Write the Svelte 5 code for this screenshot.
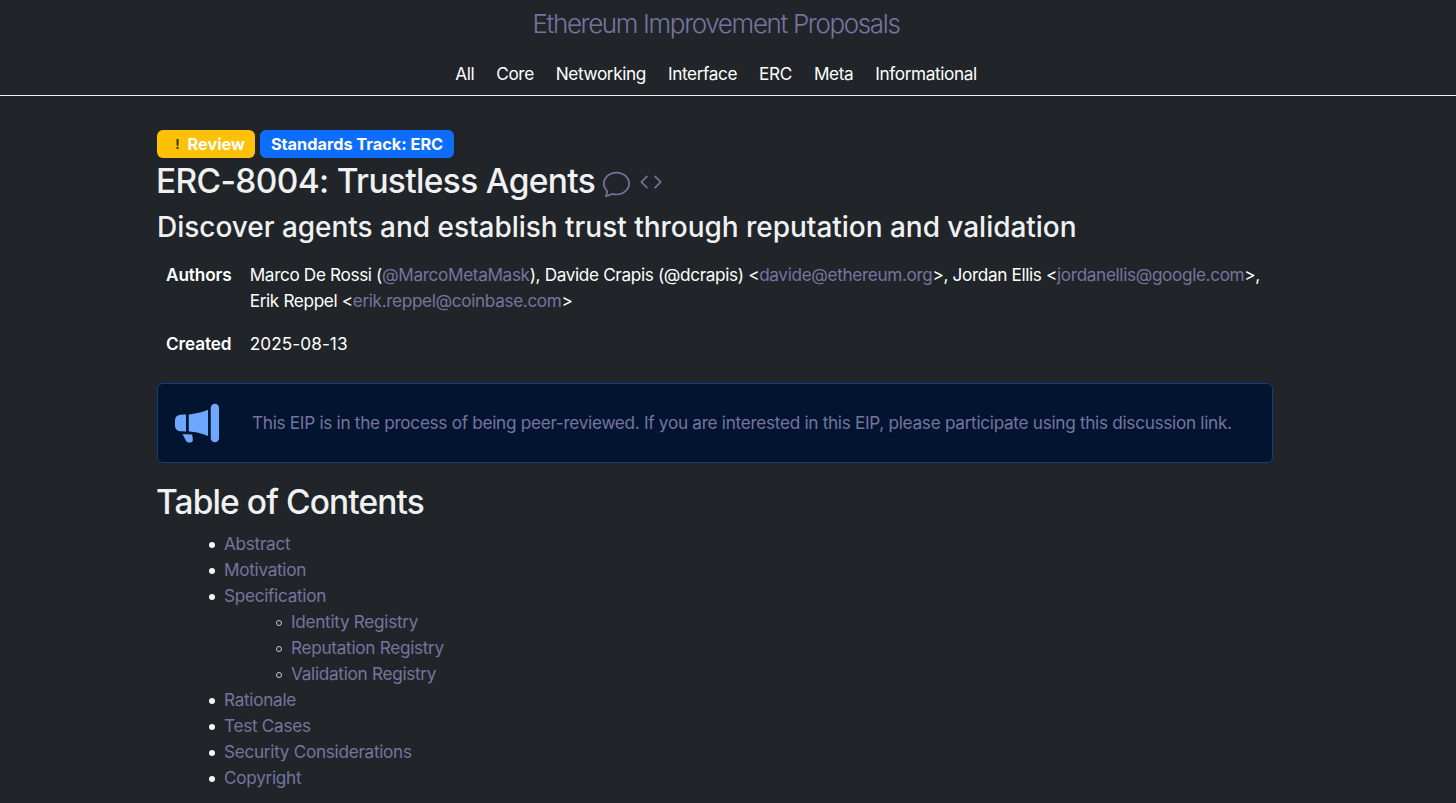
<script>
	const navItems = ['All', 'Core', 'Networking', 'Interface', 'ERC', 'Meta', 'Informational'];
	const toc = [
		{ title: 'Abstract' },
		{ title: 'Motivation' },
		{ title: 'Specification', children: ['Identity Registry', 'Reputation Registry', 'Validation Registry'] },
		{ title: 'Rationale' },
		{ title: 'Test Cases' },
		{ title: 'Security Considerations' },
		{ title: 'Copyright' }
	];
</script>

<header class="site-header">
	<a class="site-title" href="#top">Ethereum Improvement Proposals</a>
	<nav class="site-nav">
		{#each navItems as item}
			<a href="#top">{item}</a>
		{/each}
	</nav>
</header>

<main class="content">
	<div class="badges">
		<span class="badge review"><span class="warn">!</span>Review</span>
		<span class="badge track">Standards Track: ERC</span>
	</div>
	<h1>
		ERC-8004: Trustless Agents
		<svg class="chat" viewBox="0 0 16 16" aria-hidden="true">
			<path d="M2.678 11.894a1 1 0 0 1 .287.801 10.97 10.97 0 0 1-.398 2c1.395-.323 2.247-.697 2.634-.893a1 1 0 0 1 .71-.074A8.06 8.06 0 0 0 8 14c3.996 0 7-2.807 7-6 0-3.192-3.004-6-7-6S1 4.808 1 8c0 1.468.617 2.83 1.678 3.894zm-.493 3.905a21.682 21.682 0 0 1-.713.129c-.2.032-.352-.176-.273-.362a9.68 9.68 0 0 0 .244-.637l.003-.01c.248-.72.45-1.548.524-2.319C.743 11.37 0 9.76 0 8c0-3.866 3.582-7 8-7s8 3.134 8 7-3.582 7-8 7a9.06 9.06 0 0 1-2.347-.306c-.52.263-1.639.742-3.468 1.105z" />
		</svg>
		<svg class="code" viewBox="0 0 16 16" aria-hidden="true">
			<path d="M5.854 4.854a.5.5 0 1 0-.708-.708l-3.5 3.5a.5.5 0 0 0 0 .708l3.5 3.5a.5.5 0 0 0 .708-.708L2.707 8l3.147-3.146zm4.292 0a.5.5 0 0 1 .708-.708l3.5 3.5a.5.5 0 0 1 0 .708l-3.5 3.5a.5.5 0 0 1-.708-.708L13.293 8l-3.147-3.146z" />
		</svg>
	</h1>
	<h2 class="subtitle">Discover agents and establish trust through reputation and validation</h2>

	<table class="meta">
		<tbody>
			<tr>
				<th>Authors</th>
				<td>
					Marco De Rossi (<a href="#top">@MarcoMetaMask</a>), Davide Crapis (@dcrapis) &lt;<a href="#top">davide@ethereum.org</a>&gt;, Jordan Ellis &lt;<a href="#top">jordanellis@google.com</a>&gt;, Erik Reppel &lt;<a href="#top">erik.reppel@coinbase.com</a>&gt;
				</td>
			</tr>
			<tr>
				<th>Created</th>
				<td class="date">2025-08-13</td>
			</tr>
		</tbody>
	</table>

	<div class="notice">
		<svg class="horn" viewBox="0 0 16 16" aria-hidden="true">
			<path d="M13 2.5a1.5 1.5 0 0 1 3 0v11a1.5 1.5 0 0 1-3 0v-11zm-1 .724c-2.067.95-4.539 1.481-7 1.656v6.237a25.222 25.222 0 0 1 1.088.085c2.053.204 4.038.668 5.912 1.56V3.224zm-8 7.841V4.934c-.68.027-1.399.043-2.008.053A2.02 2.02 0 0 0 0 7v2c0 1.106.896 1.996 1.994 2.009a68.14 68.14 0 0 1 .496.008 64 64 0 0 1 1.51.048zm1.39 1.081c.285.021.569.047.85.078l.253 1.69a1 1 0 0 1-.983 1.187h-.548a1 1 0 0 1-.916-.599l-1.314-2.48a65.81 65.81 0 0 1 1.692.064c.327.017.65.037.966.06z" />
		</svg>
		<p>This EIP is in the process of being peer-reviewed. If you are interested in this EIP, please participate using this discussion link.</p>
	</div>

	<h2 class="toc-title">Table of Contents</h2>
	<ul class="toc">
		{#each toc as item}
			<li>
				<a href="#top">{item.title}</a>
				{#if item.children}
					<ul class="toc-nested">
						{#each item.children as child}
							<li><a href="#top">{child}</a></li>
						{/each}
					</ul>
				{/if}
			</li>
		{/each}
	</ul>
</main>

<style>
	:global(body) {
		margin: 0;
		background: #212529;
		color: #fff;
		font-family: Inter, "Noto Sans", sans-serif;
		font-size: 17.2px;
		letter-spacing: -0.3px;
		line-height: 26px;
		overflow: hidden;
	}

	a {
		color: #76749f;
		text-decoration: none;
	}

	.site-header {
		display: flex;
		flex-direction: column;
		align-items: center;
		height: 95px;
		border-bottom: 1px solid #f4f4f4;
		padding-right: 24px;
	}

	.site-title {
		margin-top: 7px;
		font-size: 26px;
		line-height: 34px;
		font-weight: 300;
		letter-spacing: -1.36px;
	}

	.site-nav {
		display: flex;
		gap: 22px;
		margin-top: 20px;
	}

	.site-nav a {
		color: #fff;
		font-size: 17.2px;
		letter-spacing: -0.38px;
	}

	.content {
		width: 1116px;
		margin-left: 157px;
		padding-top: 34px;
	}

	.badges {
		display: flex;
		gap: 5px;
		height: 28px;
	}

	.badge {
		display: block;
		height: 28px;
		padding: 0 10.5px;
		border-radius: 6px;
		color: #fff;
		font-size: 16.3px;
		font-weight: 700;
		letter-spacing: 0;
		line-height: 28px;
	}

	.review {
		background: #ffc107;
	}

	.warn {
		display: inline-block;
		width: 20px;
		color: #3a2f00;
		font-size: 13px;
		text-align: center;
		vertical-align: 1px;
	}

	.track {
		background: #0d6efd;
	}

	h1 {
		margin: 3px 0 0;
		color: #f0f1f3;
		font-size: 33.5px;
		font-weight: 500;
		letter-spacing: -0.66px;
		line-height: 40px;
		text-indent: -1px;
	}

	.chat {
		width: 27px;
		height: 27px;
		vertical-align: -4px;
		fill: #76749f;
	}

	.code {
		width: 26px;
		height: 26px;
		margin-left: -1px;
		vertical-align: -2px;
		fill: #76749f;
	}

	.subtitle {
		margin: 9px 0 0;
		color: #f0f1f3;
		font-size: 28px;
		font-weight: 500;
		letter-spacing: -0.03px;
		line-height: 34px;
	}

	.meta {
		margin-top: 9px;
		border-collapse: collapse;
	}

	.meta th {
		padding: 8.5px 9px;
		text-align: left;
		vertical-align: top;
		font-weight: 600;
		letter-spacing: -0.1px;
		white-space: nowrap;
	}

	.meta td {
		padding: 8.5px 9px;
		letter-spacing: -0.36px;
	}

	.meta td.date {
		letter-spacing: 0.08px;
	}

	.notice {
		display: flex;
		align-items: center;
		height: 80px;
		margin-top: 18px;
		box-sizing: border-box;
		border: 1px solid #0f3f80;
		border-radius: 6px;
		background: #031430;
		color: #76749f;
	}

	.horn {
		flex: none;
		width: 44px;
		height: 44px;
		margin: 0 33px 0 17px;
		fill: #6ea8fe;
	}

	.notice p {
		margin: 0;
	}

	.toc-title {
		margin: 19px 0 0;
		color: #f0f1f3;
		font-size: 33.5px;
		font-weight: 500;
		letter-spacing: -0.9px;
		line-height: 40px;
		text-indent: -1px;
	}

	.toc {
		margin: 9px 0 0;
		padding-left: 67px;
		list-style: none;
	}

	.toc-nested {
		margin: 0;
		padding-left: 67px;
		list-style: none;
	}

	.toc > li::before,
	.toc-nested > li::before {
		content: '';
		display: inline-block;
		box-sizing: border-box;
		width: 6px;
		height: 6px;
		margin-left: -15px;
		margin-right: 9px;
		border-radius: 50%;
		vertical-align: 2px;
	}

	.toc > li::before {
		background: #f4f4f4;
	}

	.toc-nested > li::before {
		border: 1px solid #c8c8c8;
	}
</style>
